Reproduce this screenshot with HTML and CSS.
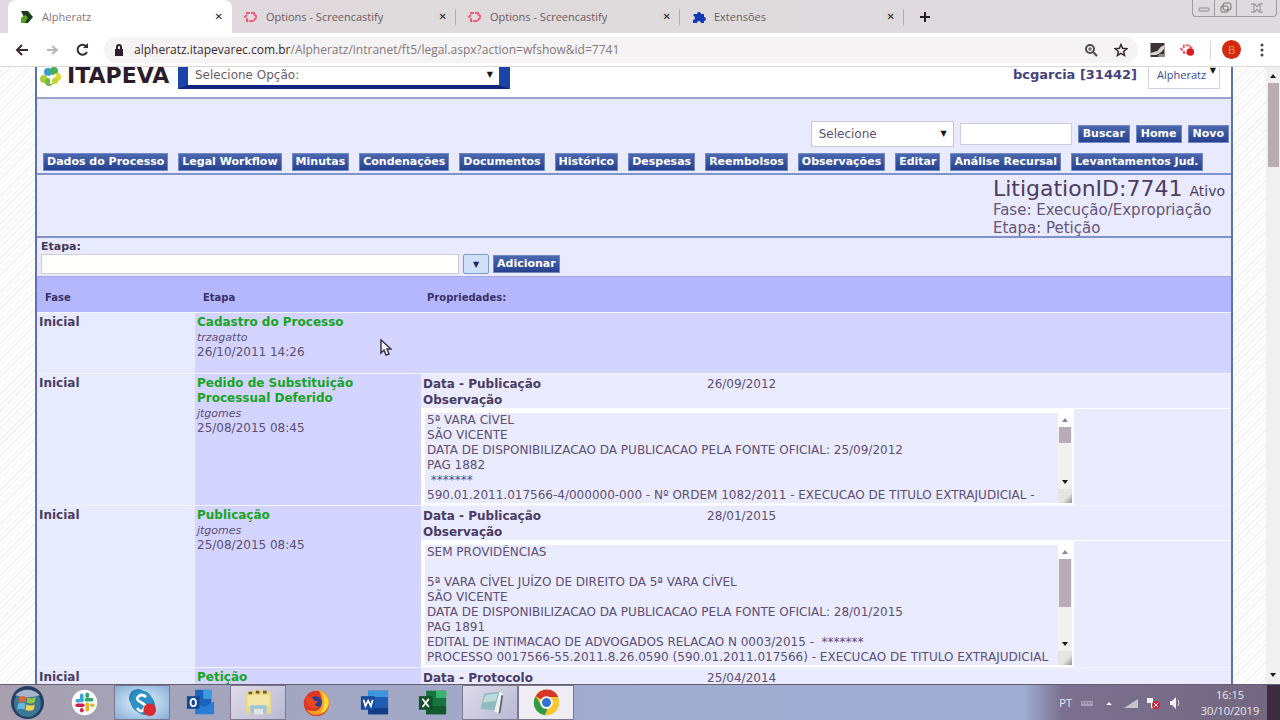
FILE: index.html
```html
<!DOCTYPE html>
<html lang="pt-BR">
<head>
<meta charset="utf-8">
<title>Alpheratz</title>
<link rel="stylesheet" href="styles.css">
</head>
<body>
<header class="browser">
  <div class="tabstrip">
    <div class="tab active">
      <svg class="fav" viewBox="0 0 14 14"><path d="M1 1h7l5 6-5 6H1l3-6z" fill="#1d3a1c"/><path d="M1 8l4-3 3 2-3 6H1z" fill="#58a51c"/></svg>
      <span class="title">Alpheratz</span><button class="x" aria-label="Fechar">✕</button>
    </div>
    <div class="tab">
      <svg class="fav" viewBox="0 0 14 14" fill="none" stroke="#ee5a78" stroke-width="2"><path d="M10 4V3H3v2L1 7l2 2v2h7v-1M10 4l3 3-3 3" stroke-dasharray="4 1"/></svg>
      <span class="title">Options - Screencastify</span><button class="x" aria-label="Fechar">✕</button>
    </div>
    <div class="tab">
      <svg class="fav" viewBox="0 0 14 14" fill="none" stroke="#ee5a78" stroke-width="2"><path d="M10 4V3H3v2L1 7l2 2v2h7v-1M10 4l3 3-3 3" stroke-dasharray="4 1"/></svg>
      <span class="title">Options - Screencastify</span><button class="x" aria-label="Fechar">✕</button>
    </div>
    <div class="tab">
      <svg class="fav" viewBox="0 0 14 14" fill="#1338b8"><path d="M2 4h3a2 2 0 1 1 4 0h3v3a2 2 0 1 1 0 4v2H9a2 2 0 0 0-4 0H1v-3a2 2 0 0 0 0-4z"/></svg>
      <span class="title">Extensões</span><button class="x" aria-label="Fechar">✕</button>
    </div>
    <button class="newtab" aria-label="Nova guia"><svg viewBox="0 0 12 12" stroke="#2a1c26" stroke-width="2"><path d="M6 1v10M1 6h10"/></svg></button>
    <div class="winctl">
      <button aria-label="Minimizar"><svg viewBox="0 0 16 12" fill="none" stroke="#8d8789"><rect x="3" y="6" width="10" height="3" rx="1"/></svg></button>
      <button aria-label="Restaurar"><svg viewBox="0 0 16 12" fill="none" stroke="#77706f"><rect x="5" y="1" width="8" height="7" rx="2"/><rect x="3" y="4" width="7" height="6" rx="1"/></svg></button>
      <button class="wide" aria-label="Fechar janela"><svg viewBox="0 0 16 12" fill="none" stroke="#8d8789"><path d="M2 2h4l2 3 2-3h4M2 10h4l2-3 2 3h4M5 2v8M11 2v8"/></svg></button>
    </div>
  </div>
  <div class="toolbar">
    <button class="nav" aria-label="Voltar"><svg viewBox="0 0 16 16" fill="none" stroke="#3c2b35" stroke-width="2"><path d="M14 8H3M8 3L3 8l5 5"/></svg></button>
    <button class="nav" aria-label="Avançar"><svg viewBox="0 0 16 16" fill="none" stroke="#bdb4b8" stroke-width="2"><path d="M3 8h10M8 4l5 4-5 4"/></svg></button>
    <button class="nav" aria-label="Recarregar"><svg viewBox="0 0 16 16" fill="none" stroke="#3c2b35" stroke-width="2"><path d="M12 4a5 5 0 1 0 1 6"/><path d="M9 6h5V1z" fill="#3c2b35" stroke="none"/></svg></button>
    <div class="omni">
      <svg class="lock" viewBox="0 0 10 12"><rect x="1" y="5" width="8" height="7" fill="#2d2028"/><path d="M3 5V3a2 2 0 0 1 4 0v2" fill="none" stroke="#2d2028" stroke-width="2"/></svg>
      <span class="url"><b>alpheratz.itapevarec.com.br</b>/Alpheratz/intranet/ft5/legal.aspx?action=wfshow&amp;id=7741</span>
      <svg class="act" viewBox="0 0 14 14" fill="none" stroke="#55474e" stroke-width="2"><circle cx="6" cy="6" r="4"/><path d="M9 9l4 4"/><path d="M4 6h4M6 4v4" stroke-width="1"/></svg>
      <svg class="act" viewBox="0 0 14 14" fill="none" stroke="#3d2c36" stroke-width="1.5"><path d="M7 1.500l1.600 3.800 4.200.4-3.200 2.700 1 4.100L7 10.300l-3.600 2.200 1-4.100L1.200 5.700l4.200-.4z"/></svg>
    </div>
    <div class="exts">
      <svg viewBox="0 0 14 14"><rect width="14" height="14" fill="#3a3436"/><path d="M0 10l7-2 3-4 4-2v3l-3 4-5 3H0z" fill="#d8d6d2"/><path d="M8 11h6v3H8z" fill="#888"/></svg>
      <svg viewBox="0 0 16 14"><path d="M9 3V2H4v2L1 6l3 2v2h4M10 3l3 2" fill="none" stroke="#ec5f6a" stroke-width="2" stroke-dasharray="4 1"/><circle cx="11" cy="9" r="4" fill="#d81c26"/></svg>
      <i class="vsep"></i>
      <span class="avatar">B</span>
      <svg class="dots" viewBox="0 0 4 14" fill="#4d4147"><circle cx="2" cy="2" r="1.500"/><circle cx="2" cy="7" r="1.500"/><circle cx="2" cy="12" r="1.500"/></svg>
    </div>
  </div>
</header>

<main class="viewport">
  <div class="page">
    <div class="brandbar">
      <svg class="mark" viewBox="0 0 22 20"><circle cx="8" cy="5" r="4" fill="#3b9ad0"/><circle cx="14" cy="4" r="4" fill="#46ad58"/><circle cx="4" cy="12" r="4" fill="#a7cf3a"/><circle cx="17" cy="10" r="4" fill="#d8d834"/><circle cx="9" cy="15" r="4" fill="#7ab93b"/><circle cx="15" cy="14" r="3" fill="#c5d435"/><path d="M7 9q4 4 9-1M11 11v6" stroke="#fff" stroke-width="2" fill="none"/></svg>
      <span class="brand">ITAPEVA</span>
      <span class="pick big"><select aria-label="Selecione Opção"><option>Selecione Opção:</option></select><i>▼</i></span>
      <span class="user">bcgarcia [31442]</span>
      <span class="pick app"><select aria-label="Aplicação"><option>Alpheratz</option></select><i>▼</i></span>
    </div>
    <div class="search">
      <span class="pick field"><select aria-label="Campo de busca"><option>Selecione</option></select><i>▼</i></span>
      <input class="query" type="text" aria-label="Busca">
      <button class="btn">Buscar</button>
      <button class="btn">Home</button>
      <button class="btn">Novo</button>
    </div>
    <nav class="menu">
      <button class="btn">Dados do Processo</button>
      <button class="btn">Legal Workflow</button>
      <button class="btn">Minutas</button>
      <button class="btn">Condenações</button>
      <button class="btn">Documentos</button>
      <button class="btn">Histórico</button>
      <button class="btn">Despesas</button>
      <button class="btn">Reembolsos</button>
      <button class="btn">Observações</button>
      <button class="btn">Editar</button>
      <button class="btn">Análise Recursal</button>
      <button class="btn">Levantamentos Jud.</button>
    </nav>
    <section class="info">
      <div>
        <p class="lit">LitigationID:7741 <small>Ativo</small></p>
        <p>Fase: Execução/Expropriação</p>
        <p>Etapa: Petição</p>
      </div>
    </section>
    <section class="add">
      <label for="etapa">Etapa:</label>
      <div class="addrow">
        <input id="etapa" type="text">
        <button class="drop" aria-label="Abrir lista">▼</button>
        <button class="btn">Adicionar</button>
      </div>
    </section>
    <table class="steps">
      <colgroup><col class="c1"><col class="c2"><col></colgroup>
      <thead><tr><th>Fase</th><th>Etapa</th><th>Propriedades:</th></tr></thead>
      <tbody>
        <tr class="first">
          <td><b>Inicial</b></td>
          <td><a href="#">Cadastro do Processo</a><em>trzagatto</em><span>26/10/2011 14:26</span></td>
          <td class="empty"></td>
        </tr>
        <tr>
          <td><b>Inicial</b></td>
          <td><a href="#">Pedido de Substituição Processual Deferido</a><em>jtgomes</em><span>25/08/2015 08:45</span></td>
          <td class="props">
            <div class="prop"><b>Data - Publicação</b><span>26/09/2012</span></div>
            <label class="obs" for="obs1">Observação</label>
            <div class="memo">
              <textarea id="obs1" rows="6" readonly>5ª VARA CÍVEL
SÃO VICENTE
DATA DE DISPONIBILIZACAO DA PUBLICACAO PELA FONTE OFICIAL: 25/09/2012
PAG 1882
 *******
590.01.2011.017566-4/000000-000 - Nº ORDEM 1082/2011 - EXECUCAO DE TITULO EXTRAJUDICIAL -</textarea>
              <div class="bar"><i class="up"></i><i class="thumb short"></i><i class="down"></i><i class="grip"></i></div>
            </div>
          </td>
        </tr>
        <tr>
          <td><b>Inicial</b></td>
          <td><a href="#">Publicação</a><em>jtgomes</em><span>25/08/2015 08:45</span></td>
          <td class="props">
            <div class="prop"><b>Data - Publicação</b><span>28/01/2015</span></div>
            <label class="obs" for="obs2">Observação</label>
            <div class="memo">
              <textarea id="obs2" rows="8" readonly>SEM PROVIDÊNCIAS

5ª VARA CÍVEL JUÍZO DE DIREITO DA 5ª VARA CÍVEL
SÃO VICENTE
DATA DE DISPONIBILIZACAO DA PUBLICACAO PELA FONTE OFICIAL: 28/01/2015
PAG 1891
EDITAL DE INTIMACAO DE ADVOGADOS RELACAO N 0003/2015 -  *******
PROCESSO 0017566-55.2011.8.26.0590 (590.01.2011.017566) - EXECUCAO DE TITULO EXTRAJUDICIAL</textarea>
              <div class="bar"><i class="up"></i><i class="thumb"></i><i class="down"></i><i class="grip"></i></div>
            </div>
          </td>
        </tr>
        <tr>
          <td><b>Inicial</b></td>
          <td><a href="#">Petição</a></td>
          <td class="props"><div class="prop"><b>Data - Protocolo</b><span>25/04/2014</span></div></td>
        </tr>
      </tbody>
    </table>
  </div>
  <div class="scroll"><i class="up"></i><i class="thumb"></i><i class="down"></i></div>
  <svg class="cursor" viewBox="0 0 12 18"><path d="M1 1v13l3-3 2 5 3-1-2-5h4z" fill="#fff" stroke="#3b3347" stroke-width="1.500"/></svg>
</main>

<footer class="taskbar">
  <button aria-label="Iniciar"><svg viewBox="0 0 32 32"><circle cx="16" cy="16" r="16" fill="#243f63"/><circle cx="16" cy="17" r="13" fill="#3c7795"/><path d="M4 9a16 16 0 0 1 24 0q-12 4-24 0z" fill="#a9b4c8"/><path d="M8 11q4-2 7 0l-1 5q-4-2-7 0z" fill="#e2672f"/><path d="M16 11q4 2 8 0l-1 5q-4 2-8 0z" fill="#8fc646"/><path d="M7 17q4-2 7 0l-1 6q-4-2-7 0z" fill="#62b8e6"/><path d="M15 18q4 2 8 0l-1 5q-4 2-8 0z" fill="#f8d24a"/></svg></button>
  <button aria-label="Slack"><svg viewBox="0 0 32 32"><circle cx="16" cy="16" r="14" fill="#fff"/><g stroke-width="4" stroke-linecap="round"><path d="M13 8v6" stroke="#36a8d8"/><path d="M8 14h2" stroke="#36a8d8"/><path d="M18 13h6" stroke="#2fa872"/><path d="M19 7v2" stroke="#2fa872"/><path d="M8 19h6" stroke="#c92050"/><path d="M13 24v1" stroke="#c92050"/><path d="M19 18v6" stroke="#e5b02c"/><path d="M24 19h1" stroke="#e5b02c"/></g></svg></button>
  <button class="open sky" aria-label="Skype"><svg viewBox="0 0 32 32"><circle cx="11" cy="11" r="10" fill="#2586b8"/><circle cx="19" cy="19" r="11" fill="#2586b8"/><circle cx="15" cy="15" r="12" fill="#2c91c4"/><path d="M20 10q-4-4-8-1t1 6 6 4-2 5-7-2" fill="none" stroke="#fff" stroke-width="3"/><circle cx="24" cy="24" r="7" fill="#d92c32"/></svg></button>
  <button aria-label="Outlook"><svg viewBox="0 0 32 32"><path d="M10 2h18v25H10z" fill="#1c62bd"/><path d="M19 2h9v10h-9z" fill="#3b9be0"/><path d="M10 16l10 5 11-6v14H10z" fill="#2a7dd2"/><path d="M1 9h14v14H1z" fill="#11499a"/><ellipse cx="8" cy="16" rx="3" ry="4" fill="none" stroke="#fff" stroke-width="2"/></svg></button>
  <button class="open" aria-label="Explorador"><svg viewBox="0 0 32 32"><path d="M2 5q14-6 28 0v23H2z" fill="#ead98c"/><path d="M4 8h24v12H4z" fill="#f5e8a6"/><path d="M5 4h4v3H5zM13 3h4v3h-4zM21 3h4v3h-4z" fill="#6c5a2c"/><path d="M7 19h18v9H7z" fill="#9dc7d8"/><path d="M11 23h10v6H11z" fill="#dce8e4"/></svg></button>
  <button aria-label="Firefox"><svg viewBox="0 0 32 32"><circle cx="16" cy="17" r="14" fill="#e03427"/><path d="M18 2q13 4 12 16a14 14 0 0 1-25 6q15 5 17-7 0-9-4-15z" fill="#f7a223"/><path d="M22 5q8 5 7 13-2 8-9 10 8-9 2-23z" fill="#ffdb3c"/><circle cx="15" cy="16" r="7" fill="#2a3f91"/><path d="M5 9q6 0 9 5l4 1-4 3q2 4 7 2-7 7-14-1-3-5-2-10z" fill="#e8481f"/></svg></button>
  <button aria-label="Word"><svg viewBox="0 0 32 32"><path d="M9 3h22v26H9z" fill="#1f5cb4"/><path d="M9 3h22v7H9z" fill="#3c97e0"/><path d="M9 22h22v7H9z" fill="#143d86"/><path d="M1 9h15v15H1z" fill="#164a9b"/><path d="M4 13l2 7 3-6 3 6 2-7" fill="none" stroke="#fff" stroke-width="2"/></svg></button>
  <button aria-label="Excel"><svg viewBox="0 0 32 32"><path d="M9 3h22v26H9z" fill="#16743c"/><path d="M20 3h11v8H20z" fill="#36b66e"/><path d="M9 20h22v9H9z" fill="#12592c"/><path d="M1 9h15v15H1z" fill="#0e5329"/><path d="M5 12l7 9M12 12l-7 9" stroke="#fff" stroke-width="2"/></svg></button>
  <button class="open" aria-label="Bloco de notas"><svg viewBox="0 0 32 32"><path d="M9 6l17-2-4 21-17-2z" fill="#8fbcc0"/><path d="M10 8l14-2-2 8-14 2z" fill="#bedada"/><path d="M26 4l4 2-3 22-7-2z" fill="#f0f0ee"/><path d="M29 8l-3 20" stroke="#5c6670" stroke-width="2"/></svg></button>
  <button class="open on" aria-label="Chrome"><svg viewBox="0 0 32 32"><circle cx="16" cy="16" r="14" fill="#f6c72f"/><path d="M16 16L4 9a14 14 0 0 1 25 1H16z" fill="#d8352a"/><path d="M4 9l8 13 5 1-3 7A14 14 0 0 1 4 9z" fill="#2c9a4a"/><circle cx="16" cy="16" r="7" fill="#fff"/><circle cx="16" cy="16" r="5" fill="#3474d0"/></svg></button>
  <div class="tray">
    <span>PT</span>
    <svg viewBox="0 0 14 14"><path d="M1 5h12v5H1z" fill="#a9a0ab"/><path d="M2 7h10" stroke="#746a80" stroke-dasharray="2 1"/></svg>
    <svg viewBox="0 0 14 14"><path d="M4 9l3-3 3 3z" fill="#f0eef5"/></svg>
    <svg viewBox="0 0 14 14"><path d="M0 12L14 3v9z" fill="#c3c8c8"/></svg>
    <svg viewBox="0 0 14 14"><path d="M1 2h6v5H1zM5 6h5v6H5z" fill="#f5f3f6"/><circle cx="10" cy="9" r="4" fill="#cf2536"/><path d="M8 7l4 4M12 7l-4 4" stroke="#fff"/></svg>
    <svg viewBox="0 0 14 14"><path d="M2 5h2l4-4v12L4 9H2z" fill="#f5f3f6"/><path d="M10 4q2 3 0 6" fill="none" stroke="#d5d0dc"/></svg>
    <time>16:15<br>30/10/2019</time>
  </div>
  <button class="desk" aria-label="Mostrar área de trabalho"></button>
</footer>
</body>
</html>
```

FILE: styles.css
```css
* { box-sizing: border-box; }
body {
  margin: 0;
  height: 100vh;
  display: flex;
  flex-direction: column;
  overflow: hidden;
  font-family: "DejaVu Sans", sans-serif;
  font-size: 12px;
  line-height: 15px;
  color: #5c4e74;
}
button, input, select, textarea { font: inherit; color: inherit; margin: 0; }
button { border: 0; background: none; padding: 0; }
p { margin: 0; }
i { font-style: normal; }

.browser { flex: none; font-family: "Open Sans", sans-serif; }
.tabstrip {
  height: 33px;
  display: flex;
  padding-left: 8px;
  background: linear-gradient(90deg, #e2d8e2, #dfdadc 30%, #dedadd);
}
.tab {
  width: 224px;
  display: flex;
  align-items: center;
  gap: 8px;
  padding: 0 9px 0 12px;
  font-size: 11px;
  color: #6b5a63;
}
.tab.active { background: #fff; border-radius: 8px 8px 0 0; color: #83767c; }
.tab:not(.active)::after { content: ""; width: 1px; height: 16px; margin-right: -9px; background: #b9a9b1; }
.fav { width: 14px; height: 14px; flex: none; }
.title { flex: 1; white-space: nowrap; }
.x { font: bold 10px "DejaVu Sans", sans-serif; color: #2a2025; }
.newtab { width: 42px; display: flex; align-items: center; justify-content: center; }
.newtab svg { width: 12px; height: 12px; }
.winctl {
  margin: 0 3px 0 auto;
  display: flex;
  height: 17px;
  border: 1px solid #a19a9d;
  border-top: 0;
  border-radius: 0 0 4px 4px;
}
.winctl button { width: 22px; display: flex; align-items: center; justify-content: center; border-right: 1px solid #a19a9d; }
.winctl .wide { width: 39px; border-right: 0; }
.winctl svg { width: 16px; height: 12px; }
.toolbar {
  height: 34px;
  display: flex;
  align-items: center;
  padding: 0 16px 0 14px;
  background: #fff;
  border-bottom: 1px solid #ddd5d7;
}
.nav { width: 30px; height: 16px; text-align: left; }
.nav svg { width: 16px; height: 16px; display: block; }
.omni {
  flex: 1;
  height: 26px;
  display: flex;
  align-items: center;
  gap: 16px;
  padding: 0 10px;
  border-radius: 13px;
  background: #f5f3f3;
}
.lock { width: 10px; height: 12px; }
.url { flex: 1; margin-left: -6px; font-size: 12px; color: #84777d; white-space: nowrap; }
.url b { font-weight: 400; color: #3a2c34; }
.act { width: 14px; height: 14px; }
.exts { display: flex; align-items: center; gap: 15px; padding-left: 12px; }
.exts svg { width: 15px; height: 14px; }
.exts .dots { width: 4px; }
.vsep { width: 1px; height: 18px; background: #ddd5d7; }
.avatar { width: 19px; height: 19px; margin: 0 4px 0 -4px; border-radius: 50%; background: #d3290f; color: #f49a66; font-size: 11px; line-height: 19px; text-align: center; }

.viewport {
  flex: 1;
  min-height: 0;
  position: relative;
  display: flex;
  overflow: hidden;
  background: repeating-linear-gradient(135deg, #fff 0 3px, #f1eff0 3px 4px);
}
.page {
  flex: 1;
  min-width: 0;
  margin: 0 33px 0 35px;
  border: solid #5c70b4;
  border-width: 0 2px;
  background: #eaeaff;
}
.brandbar {
  height: 32px;
  display: flex;
  align-items: flex-start;
  padding: 0 11px 0 3px;
  background: #fff;
  border-bottom: 2px solid #98a3cc;
}
.mark { width: 22px; height: 20px; }
.brand { width: 116px; padding-left: 5px; font-size: 22px; font-weight: 700; line-height: 18px; color: #2b1c2c; }
.pick { position: relative; display: block; }
.pick select { appearance: none; width: 100%; height: 100%; border: 0; background: #fff; display: block; }
.pick i { position: absolute; right: 6px; top: 0; font-size: 8px; pointer-events: none; color: #17131c; }
.pick.big { width: 332px; height: 22px; border: solid #1c44a8; border-width: 0 11px 4px 10px; border-bottom-color: #0d2480; }
.pick.big select { padding: 0 7px 2px; color: #6c5c68; }
.user { margin-left: auto; font-size: 13px; font-weight: 700; line-height: 16px; color: #46427c; }
.pick.app { width: 72px; height: 22px; margin-left: 11px; border: 1px solid #cdd2e8; border-top: 0; }
.pick.app select { padding: 0 0 6px 8px; font-family: "Open Sans", sans-serif; font-size: 11px; color: #3a4c94; }
.pick.app i { right: 3px; line-height: 8px; }
.search {
  display: flex;
  align-items: center;
  justify-content: flex-end;
  gap: 6px;
  padding: 22px 2px 6px;
}
.search .btn { padding: 0 4px; }
.pick.field { width: 143px; height: 26px; border: 1px solid #c9c6da; }
.pick.field select { padding: 0 7px; }
.pick.field i { line-height: 24px; }
.query { width: 112px; height: 22px; border: 1px solid #d0cde0; background: #fff; padding: 0 4px; }
.btn {
  height: 18px;
  padding: 0 3px;
  background: linear-gradient(#4c68b0, #26428f);
  border: 1px solid #7288c4;
  color: #fff;
  font-size: 11px;
  font-weight: 700;
  line-height: 16px;
  white-space: nowrap;
}
.menu { display: flex; gap: 10px; padding: 0 6px 2px; border-bottom: 2px solid #7c93cc; }
.info {
  display: flex;
  justify-content: flex-end;
  height: 63px;
  padding: 4px 6px 0 0;
  border-bottom: 2px solid #7c93cc;
  font-size: 15px;
  line-height: 18px;
  color: #64557a;
}
.info .lit { font-size: 22px; line-height: 20px; color: #4c3c60; }
.info small { font-size: 14px; }
.add { padding: 1px 4px 2px; }
.add label { display: block; font-weight: 700; font-size: 11px; color: #43375c; }
.addrow { display: flex; align-items: center; gap: 4px; }
.addrow input { width: 418px; height: 20px; border: 1px solid #cfcbdc; background: #fffffc; }
.drop { width: 26px; height: 20px; border: 1px solid #7b9bc8; border-radius: 2px; background: #cfe0f8; color: #1d2a54; font-size: 8px; }

.steps { width: 100%; table-layout: fixed; border-collapse: collapse; }
.c1 { width: 158px; }
.c2 { width: 226px; }
.steps th { height: 36px; padding: 5px 8px 0; text-align: left; background: #b5b7fd; border-top: 1px solid #a5a8e0; color: #3a2f66; font-size: 10px; }
.steps th:last-child { padding-left: 6px; }
.steps td { padding: 2px; vertical-align: top; background: #e8ebff; border-top: 1px solid #f4f4ff; }
.steps td:nth-child(2) { background: #d3d4ff; padding-right: 40px; }
.steps b, .steps label { color: #4b3b64; font-weight: 700; }
.steps a { color: #17a41f; font-weight: 700; text-decoration: none; display: block; }
.steps em, .steps td > span { display: block; }
.steps em { font-size: 11px; }
.steps .first td { height: 61px; }
.steps td.empty { background: #d3d4ff; }
.steps td.props { padding: 3px 0 0; background: #eaebff; }
.prop { display: grid; grid-template-columns: 284px 1fr; padding-left: 2px; }
.obs { display: block; padding-left: 2px; line-height: 16px; border-bottom: 1px solid #fff; }
.memo { display: flex; width: 653px; max-width: 100%; border: solid #fff; border-width: 4px 2px 2px 4px; }
.memo textarea {
  flex: 1;
  min-width: 0;
  display: block;
  padding: 0 2px;
  border: 0;
  resize: none;
  overflow: hidden;
  white-space: pre;
  background: #eaebff;
  line-height: 15px;
}
.bar { width: 14px; display: flex; flex-direction: column; align-items: center; background: #f3f1ef; }
.bar .thumb { width: 12px; height: 48px; background: #b9acb8; }
.bar .short { height: 16px; }
.bar .grip { width: 14px; height: 14px; background: linear-gradient(135deg, #e6e4e0 60%, #99938f); }
.up, .down { width: 14px; height: 14px; display: flex; align-items: center; justify-content: center; }
.bar .up { background: #fff; }
.down { margin-top: auto; }
.up::before { content: ""; border: 3px solid transparent; border-top: 0; border-bottom: 4px solid #8e858c; }
.down::before { content: ""; border: 3px solid transparent; border-bottom: 0; border-top: 4px solid #1b1518; }
.scroll { width: 14px; display: flex; flex-direction: column; align-items: center; background: #f1eff0; padding: 2px 0; }
.scroll .up::before { border-bottom-color: #1b1518; }
.scroll .thumb { width: 11px; height: 84px; background: #b9adb2; }
.cursor { position: absolute; left: 380px; top: 272px; width: 12px; height: 18px; }

.taskbar {
  flex: none;
  height: 36px;
  display: flex;
  background: linear-gradient(90deg, #a79fae, #a3a6c0 20%, #a0acd0 50%, #a0acd2 80%, #7b7090 83%, #73677f);
  border-top: 1px solid #645c70;
}
.taskbar > button { width: 56px; margin-right: 2px; display: flex; align-items: center; justify-content: center; }
.taskbar > button:first-child { width: 54px; }
.taskbar > button > svg { width: 29px; height: 29px; }
.taskbar > button:first-child > svg { width: 33px; height: 33px; }
.taskbar .open { background: linear-gradient(135deg, #dfdbea, #b9b9d3); border: 1px solid #7f7790; }
.taskbar .sky { background: radial-gradient(#e6f4ff, #84add6); }
.taskbar .on { background: #f0ecf3; margin-left: -2px; }
.tray { margin-left: auto; display: flex; align-items: center; gap: 8px; color: #ece8f3; font-family: "Open Sans", sans-serif; font-size: 11px; }
.tray svg { width: 14px; height: 14px; }
.tray time { width: 74px; margin-left: 3px; text-align: center; line-height: 16px; }
.taskbar > .desk { width: 13px; margin: 0; background: #3e2c3f; }
```
